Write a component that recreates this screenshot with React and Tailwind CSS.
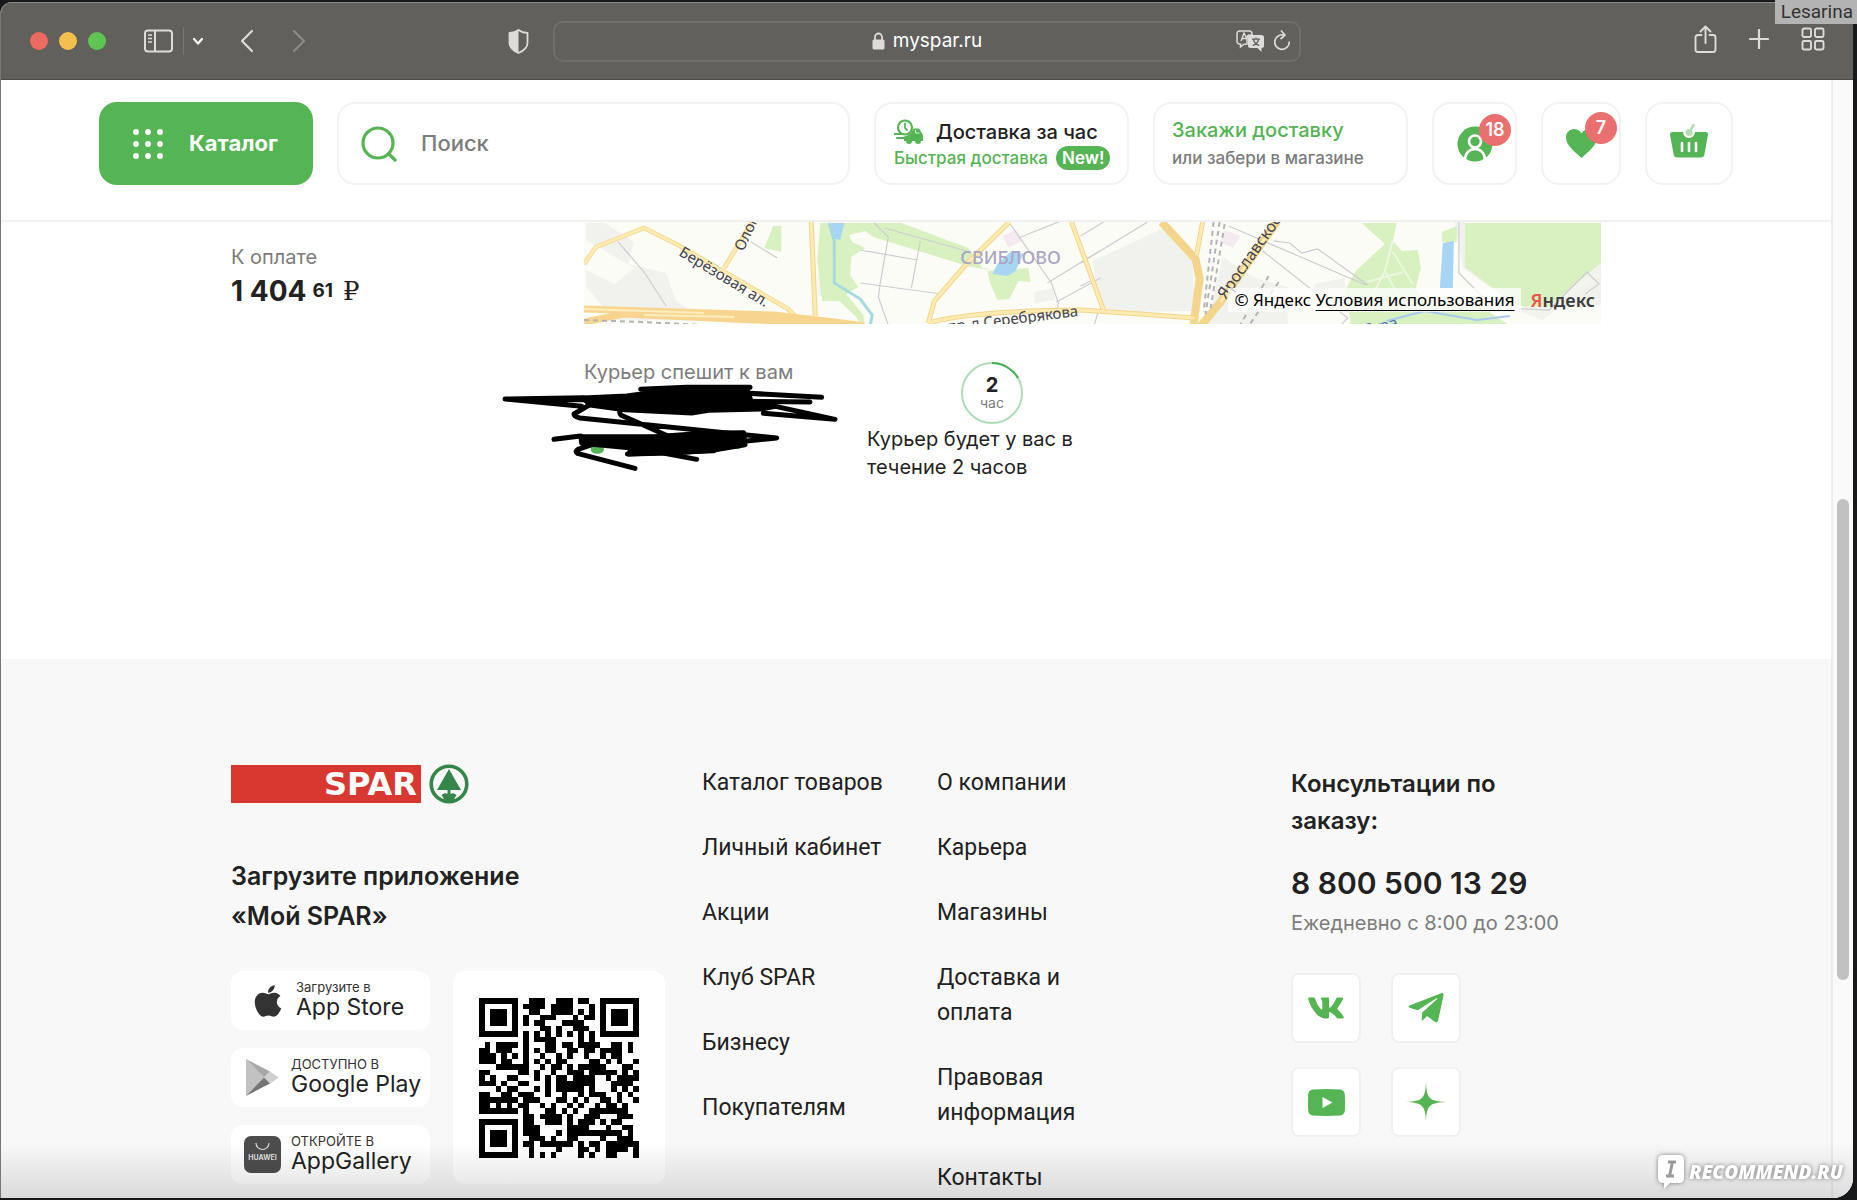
import React, { useState } from "react";
import { FaApple, FaTelegramPlane, FaVk } from "react-icons/fa";

const catalogLinks = ["Каталог товаров", "Личный кабинет", "Акции", "Клуб SPAR", "Бизнесу", "Покупателям"];
const companyLinks = ["О компании", "Карьера", "Магазины", "Доставка и оплата", "Правовая информация", "Контакты"];

// QR modules, one string per row
const qrRows = [
  "#######..###..###.##..#######",
  "#.....#.####.####...#.#.....#",
  "#.###.#..##..####.#.#.#.###.#",
  "#.###.#.#..###...#.##.#.###.#",
  "#.###.#.#.##...####...#.###.#",
  "#.....#....##.#..###..#.....#",
  "#######.#.#.#.#.#.#.#.#######",
  "........#.####....#.#........",
  ".#.####.#...##.##.####..##.#.",
  "##.###..#.#.##..##.##.####.#.",
  "###.#.#.#..#..#.#..#..#.##...",
  "###.##..#.#.#.##....##.#.#..#",
  "...######..#.##.#.#####...##.",
  "##.....##.#..#..###.#####.#.#",
  "#.#..##...#.#.##.####..#.####",
  "###.#..##...#.#######...####.",
  "...#.##...#.#.#####.#...#.#.#",
  "##..##.###..#..#..#.###..#.#.",
  "#######.###...##.#.#..##.#..#",
  "##.#.#.##..#.#..#.#..#.##.#..",
  "#######.#...##.#.#..#######..",
  "........##.####.#..###...###.",
  "#######.##..###.#.###.#.##...",
  "#.....#.###.....####...#..##.",
  "#.###.#.###...#.##########.#.",
  "#.###.#..###.#..##....#..###.",
  "#.###.#.##.######.#.##.######",
  "#.....#..#....#...##.#.####.#",
  "#######..#.#.#....#.#..##...#",
];

function QrCode() {
  return (
    <svg viewBox="0 0 29 29" className="w-40 h-40" role="img" aria-label="QR-код приложения" shapeRendering="crispEdges">
      {qrRows.map((row, y) =>
        row.split("").map((cell, x) =>
          cell === "#" ? <rect key={`${x}-${y}`} x={x} y={y} width="1" height="1" /> : null
        )
      )}
    </svg>
  );
}

function BrowserBar() {
  return (
    <div className="grid grid-cols-[552fr_748fr_552fr] items-center h-[78px] shrink-0 bg-[#61605d] border-t border-[#8a8987] border-b border-b-[#4b4a48] text-[#dddcda]">
      <div className="flex items-center pl-[29px]">
        <div className="flex gap-[11px]">
          <span className="w-[18px] h-[18px] rounded-full bg-[#ed6a5e]"></span>
          <span className="w-[18px] h-[18px] rounded-full bg-[#f5bf4f]"></span>
          <span className="w-[18px] h-[18px] rounded-full bg-[#61c554]"></span>
        </div>
        <button aria-label="Боковое меню" className="ml-[38px]">
          <svg className="w-[29px] h-6" viewBox="0 0 29 24" fill="none" stroke="currentColor" strokeWidth="2">
            <rect x="1" y="1.5" width="27" height="21" rx="3" />
            <path d="M11 1.5v21" />
            <path d="M4 6h4M4 9.5h4M4 13h4" strokeWidth="1.4" />
          </svg>
        </button>
        <span className="w-px h-7 ml-2.5 bg-[#777673]"></span>
        <button aria-label="Группы вкладок" className="ml-2">
          <svg className="w-3 h-3" viewBox="0 0 12 12" fill="none" stroke="white" strokeWidth="2.2" strokeLinecap="round" strokeLinejoin="round">
            <path d="M2 4l4 4.5L10 4" />
          </svg>
        </button>
        <button aria-label="Назад" className="ml-9">
          <svg className="w-[14px] h-6" viewBox="0 0 14 24" fill="none" stroke="currentColor" strokeWidth="2.2" strokeLinecap="round" strokeLinejoin="round">
            <path d="M12 2L2 12l10 10" />
          </svg>
        </button>
        <button aria-label="Вперёд" className="ml-[38px] text-[#8b8a88]">
          <svg className="w-[14px] h-6" viewBox="0 0 14 24" fill="none" stroke="currentColor" strokeWidth="2.2" strokeLinecap="round" strokeLinejoin="round">
            <path d="M2 2l10 10L2 22" />
          </svg>
        </button>
        <button aria-label="Отчёт о конфиденциальности" className="ml-auto mr-6">
          <svg className="w-[21px] h-[25px]" viewBox="0 0 21 25">
            <path d="M10.500 1C8 3 4.500 3.800 1.500 4v10c0 4.500 4.500 8 9 10 4.500-2 9-5.500 9-10V4c-3-.2-6.500-1-9-3z" fill="none" stroke="currentColor" strokeWidth="1.800" strokeLinejoin="round" />
            <path d="M10.500 1C8 3 4.500 3.800 1.500 4v10c0 4.500 4.500 8 9 10z" fill="currentColor" />
          </svg>
        </button>
      </div>

      <div className="flex items-center justify-center relative h-[41px] rounded-[10px] border-2 border-[#6f6e6b]">
        <svg className="w-[13px] h-[18px] mr-2" viewBox="0 0 13 18">
          <rect x="0.500" y="7.500" width="12" height="10" rx="1.500" fill="currentColor" />
          <path d="M3 8V5a3.500 3.500 0 017 0v3" fill="none" stroke="currentColor" strokeWidth="1.800" />
        </svg>
        <input
          aria-label="Адрес"
          defaultValue="myspar.ru"
          className="field-sizing-content bg-transparent outline-none text-white text-[19px] leading-6 font-['Inter',sans-serif]"
        />
        <div className="absolute right-2 flex items-center gap-2">
          <button aria-label="Перевести">
            <svg className="w-[29px] h-[22px]" viewBox="0 0 29 22">
              <path d="M3.500 1h10a2.500 2.500 0 012.500 2.500V5h-2a3 3 0 00-3 3v6l-3 .200L4.500 17v-3h-1A2.500 2.500 0 011 11.500v-8A2.500 2.500 0 013.500 1z" fill="none" stroke="currentColor" strokeWidth="1.500" />
              <path d="M5 11l3-8 3 6M6 8.500h4" fill="none" stroke="currentColor" strokeWidth="1.400" />
              <path d="M14.500 5h11A2.500 2.500 0 0128 7.500v8a2.500 2.500 0 01-2.500 2.500v4l-4-4h-7a2.500 2.500 0 01-2.500-2.500v-8A2.500 2.500 0 0114.500 5z" fill="currentColor" />
              <path d="M16 9.200h8M20 7.500v1.700M22.500 9.500c-.500 2.500-2.500 5-6 6M17.500 9.500c.500 2.500 2.500 5 6 6" fill="none" stroke="#61605d" strokeWidth="1.300" />
            </svg>
          </button>
          <button aria-label="Обновить">
            <svg className="w-[18px] h-[22px]" viewBox="0 0 18 22" fill="none" stroke="currentColor" strokeWidth="1.700" strokeLinecap="round" strokeLinejoin="round">
              <path d="M11.500 5.200A7.300 7.300 0 1016.300 12" />
              <path d="M8.500 1l3.500 4.200-4 3.300" />
            </svg>
          </button>
        </div>
      </div>

      <div className="flex items-center justify-end gap-8 pr-7 pb-1">
        <button aria-label="Поделиться">
          <svg className="w-[23px] h-[29px]" viewBox="0 0 23 29" fill="none" stroke="currentColor" strokeWidth="1.900" strokeLinecap="round" strokeLinejoin="round">
            <path d="M7.500 10H4a2.500 2.500 0 00-2.500 2.500v12A2.500 2.500 0 004 27h15a2.500 2.500 0 002.500-2.500v-12A2.500 2.500 0 0019 10h-3.500" />
            <path d="M11.500 18V1.500M6.500 6.500l5-5 5 5" />
          </svg>
        </button>
        <button aria-label="Новая вкладка">
          <svg className="w-5 h-5" viewBox="0 0 20 20" stroke="currentColor" strokeWidth="2.200" strokeLinecap="round">
            <path d="M10 1v18M1 10h18" />
          </svg>
        </button>
        <button aria-label="Обзор вкладок">
          <svg className="w-6 h-6" viewBox="0 0 24 24" fill="none" stroke="currentColor" strokeWidth="1.900">
            <rect x="1.500" y="1.500" width="8.500" height="8.500" rx="1.500" />
            <rect x="14" y="1.500" width="8.500" height="8.500" rx="1.500" />
            <rect x="1.500" y="14" width="8.500" height="8.500" rx="1.500" />
            <rect x="14" y="14" width="8.500" height="8.500" rx="1.500" />
          </svg>
        </button>
      </div>
    </div>
  );
}

function Header() {
  const [query, setQuery] = useState("");

  return (
    <header className="flex items-start gap-6 h-[142px] px-[98px] pt-[22px] bg-white border-b-2 border-[#f0f0f0]">
      <button className="flex items-center w-[214px] h-[83px] pl-[34px] rounded-[18px] bg-[#55b454] text-white shrink-0">
        <svg className="w-[30px] h-[30px]" viewBox="0 0 30 30" fill="currentColor">
          {[3, 15, 27].map((y) => [3, 15, 27].map((x) => <circle key={`${x}-${y}`} cx={x} cy={y} r="2.900" />))}
        </svg>
        <span className="ml-[26px] text-[22px] font-bold">Каталог</span>
      </button>

      <label className="flex items-center flex-1 min-w-0 h-[83px] pl-[22px] rounded-[18px] border-2 border-[#f3f3f3]">
        <svg className="w-9 h-9 shrink-0" viewBox="0 0 36 36" fill="none" stroke="#55b454" strokeWidth="3.200" strokeLinecap="round">
          <circle cx="17" cy="17" r="15" />
          <path d="M28 28l6 6" />
        </svg>
        <input
          type="search"
          aria-label="Поиск"
          placeholder="Поиск"
          value={query}
          onChange={(e) => setQuery(e.target.value)}
          className="flex-1 min-w-0 ml-6 outline-none text-[22px] font-medium placeholder:text-[#7c7c7c]"
        />
      </label>

      <a href="#fast" className="flex flex-col justify-center w-[255px] h-[83px] pl-[18px] rounded-[18px] border-2 border-[#f3f3f3] shrink-0">
        <span className="flex items-center gap-3 text-[20px] leading-7 font-medium text-[#222]">
          <svg className="w-[30px] h-[25px]" viewBox="0 0 30 25">
            <circle cx="11" cy="8.500" r="7" fill="none" stroke="#55b454" strokeWidth="2.200" />
            <path d="M11 4.500V9l2 2" fill="none" stroke="#55b454" strokeWidth="1.800" strokeLinecap="round" />
            <path d="M0 15h9M3 19h7" stroke="#55b454" strokeWidth="2" strokeLinecap="round" />
            <path d="M10 17.500c4-.5 8-3.500 9.500-8H25l4 6.500v6h-2a3 3 0 01-6 0h-3a3 3 0 01-6 0h-2z" fill="#55b454" />
            <path d="M21.500 11v3h4" stroke="white" fill="none" strokeWidth="0.800" />
          </svg>
          Доставка за час
        </span>
        <span className="flex items-center gap-2 text-[17px] leading-6 font-medium text-[#55b454]">
          Быстрая доставка
          <span className="px-1.5 rounded-full bg-[#55b454] text-white font-semibold">New!</span>
        </span>
      </a>

      <a href="#order" className="flex flex-col justify-center w-[255px] h-[83px] pl-[17px] rounded-[18px] border-2 border-[#f3f3f3] shrink-0">
        <span className="text-[20px] leading-7 font-medium text-[#55b454]">Закажи доставку</span>
        <span className="text-[17px] leading-7 font-medium text-[#7c7c7c]">или забери в магазине</span>
      </a>

      <button aria-label="Профиль" className="relative flex items-center justify-center w-[85px] h-[83px] rounded-[18px] border-2 border-[#f3f3f3] shrink-0">
        <svg className="w-9 h-9" viewBox="0 0 36 36">
          <circle cx="18" cy="18" r="17.500" fill="#55b454" />
          <circle cx="18" cy="15.500" r="6" fill="none" stroke="white" strokeWidth="2.600" />
          <path d="M8 34c0-6.500 4-11 10-11s10 4.500 10 11" fill="none" stroke="white" strokeWidth="2.600" />
        </svg>
        <span className="absolute top-2.5 right-1 flex items-center justify-center w-8 h-8 rounded-full bg-[#e9706e] text-white text-lg font-semibold">18</span>
      </button>

      <button aria-label="Избранное" className="relative flex items-center justify-center w-20 h-[83px] rounded-[18px] border-2 border-[#f3f3f3] shrink-0">
        <svg className="w-[31px] h-[29px]" viewBox="0 0 31 29" fill="#55b454">
          <path d="M15.500 29C11 24.500 0 17 0 8.500 0 3.500 3.500 0 8 0c3 0 6 1.500 7.500 4.500C17 1.500 20 0 23 0c4.500 0 8 3.500 8 8.500C31 17 20 24.500 15.500 29z" />
        </svg>
        <span className="absolute top-2 right-0.5 flex items-center justify-center w-8 h-8 rounded-full bg-[#e9706e] text-white text-lg font-semibold">7</span>
      </button>

      <button aria-label="Корзина" className="flex items-center justify-center w-[88px] h-[83px] pb-1.5 rounded-[18px] border-2 border-[#f3f3f3] shrink-0">
        <svg className="w-[38px] h-[34px]" viewBox="0 0 38 34">
          <path d="M2 8h11a6 6 0 0012 0h11q2 0 2 2.500L34.500 30q-.5 3.500-4 3.500h-23q-3.500 0-4-3.500L0 10.500Q0 8 2 8z" fill="#55b454" />
          <path d="M19.500 8l4-7" stroke="#b5dcb5" strokeWidth="2.600" strokeLinecap="round" />
          <circle cx="19" cy="8.500" r="3.500" fill="#b5dcb5" />
          <path d="M12 19v8M19 19v8M26 19v8" stroke="white" strokeWidth="2.600" strokeLinecap="round" />
        </svg>
      </button>
    </header>
  );
}

function CityMap() {
  return (
    <div className="relative h-[102px] overflow-hidden">
      <svg className="w-full h-full" viewBox="0 0 1016 102" preserveAspectRatio="xMidYMid slice" fontFamily="'Noto Sans', sans-serif">
        <rect width="1016" height="102" fill="#fbfcf6" />

        {/* built-up areas */}
        <g fill="#f1f1ee">
          <path d="M2 1h19l29 19-6 22 38 9 10 28 20 13-3 6H30L2 64V48l29 14 19-16L2 18z" />
          <path d="M508 39l71-33 29 33 2 50-93 1z" />
          <path d="M234 54l14-1v20l-14 1zM450 70l20-4v12l-20 3zM638 35l30 20 35 10v37h-80zM730 62l30-6v30l-30-8z" />
          <path d="M870 0h10v45l55 38h81V36l-60 50-30-6-48-34z" />
        </g>
        <path d="M418 14l14-6 6 10-14 8zM640 8l16 6-8 12-12-6z" fill="#f5eaf0" />

        {/* parks */}
        <g fill="#d9f0c1">
          <path d="M236 1h81l67 25 14 20 10 2-10-1-12-2-97-30-8-6-16 4 3 7 13 6-14 9-1 18 8 12-12 7 17 21 2 16-9-14-17-16h-17l-2-17-3-24z" />
          <path d="M189 4h8v26l-17-4zM403 49l41-3 2 14-12-1-9 18-12 1-7-16z" />
          <path d="M777 1h35l-4 18 9 10 16-1 3 18-5 20 8 12h47l52 34H761l5-13-6-30 11-20 29-27z" />
          <path d="M857 10l15-6v16h-15zM880 1h136v40l-58 48-29-7-49-37z" />
        </g>
        <path d="M958 98l-28-10 14-4 20 2 46-40 6 8z" fill="#f4f4ee" />
        <path d="M808 19l-8 30 20 36M800 49l-18 36M818 50l-36 10M808 30l20 32" fill="none" stroke="#ecf7df" strokeWidth="2" />

        {/* water */}
        <g fill="#a9d5f5">
          <path d="M246 1h14l-4 17-8-2zM413 42l14-13 12 3-8 17-8 5-15-2z" />
          <path d="M858 21l11-2-1 47h-13z" />
        </g>
        <path d="M245 1l5 18v42l26 16 12 16-2 10" fill="none" stroke="#a5dbe0" strokeWidth="3" />
        <path d="M802 99l38-10 52 9 33-4" fill="none" stroke="#a9c8ee" strokeWidth="2" />

        {/* minor streets */}
        <g fill="none" stroke="#cfccd1" strokeWidth="1.200">
          <path d="M34 20l26 30 22 34M167 20l26 16" />
          <path d="M290 1l14 14-8 46-2 14 10 28M276 28l57 10M336 19l-9 47M276 61l81 11M300 6l82 23" />
          <path d="M425 1l42 60 7 20-2 10-18 3M434 16l50-20M463 61l52-32M472 80l44-24" />
          <path d="M496 14l23-14M496 41l67-41M496 64l12-6M644 4l137 59M678 29l85 67-6 6M689 19l16 2 12 10 16-4 50 36" />
          <path d="M874 0v51l28 28M920 86l44 2 38-38 12 12-14 10M514 89l-4 13" />
        </g>

        {/* highways */}
        <g fill="none" stroke="#f3d58b" strokeLinejoin="round">
          <path d="M0 42l12-17L60 6l34 17 110 64 8 8M168 0l-28 46" strokeWidth="4.500" />
          <path d="M227 0l4 94M425 0l-43 42-32 37-6 22M487 0l32 88M618 0l-6 33" strokeWidth="5" />
          <path d="M344 101q40-12 152-13l60 4 54 4" strokeWidth="5" />
          <path d="M577 0l34 37 4 20-4 30-2 15M692 0l-56 80-20 24" strokeWidth="8" />
        </g>
        <g fill="none" stroke="#fdebb2" strokeLinejoin="round">
          <path d="M0 42l12-17L60 6l34 17 110 64 8 8M168 0l-28 46" strokeWidth="3" />
          <path d="M227 0l4 94M425 0l-43 42-32 37-6 22M487 0l32 88M618 0l-6 33" strokeWidth="3" />
          <path d="M344 101q40-12 152-13l60 4 54 4M692 0l-56 80" strokeWidth="3" />
        </g>
        <path d="M0 87l190 6 60 7 30 4M0 100l40-8 130 6 70 2" fill="none" stroke="#f8d58f" strokeWidth="7" />
        <path d="M0 87l120 4M60 93l90 2" fill="none" stroke="#fdedc0" strokeWidth="2" />

        {/* railways */}
        <g fill="none" stroke="#b4b4b8" strokeWidth="2" strokeDasharray="5 4">
          <path d="M0 98l60 2 60 3M629 0l-10 90M635 0l-14 92M640 2l-14 84M684 54l-28 48M694 60l-30 44" />
        </g>

        <g fill="#444450" fontSize="15">
          <text x="94" y="33" transform="rotate(31 94 33)">Берёзовая ал.</text>
          <text x="159" y="30" transform="rotate(-65 159 30)">Олонецкая</text>
          <text x="641" y="78" fontSize="16" transform="rotate(-55 641 78)">Ярославское</text>
          <text x="364" y="110" transform="rotate(-7 364 110)">пр-д Серебрякова</text>
          <text x="225" y="112">О</text>
        </g>
        <text x="376" y="42" fontSize="18" fontWeight="500" fill="#aaa5c2">СВИБЛОВО</text>
        <text x="780" y="114" fontSize="16" fill="#4d71b8" transform="rotate(-14 780 114)">Яуза</text>
      </svg>
      <div className="absolute right-1.5 bottom-3 flex items-center gap-2.5 font-['Noto_Sans',sans-serif] text-[17px] leading-6 text-black">
        <span className="px-1.5 bg-white/75">
          © Яндекс <a href="#terms" className="underline underline-offset-4">Условия использования</a>
        </span>
        <span className="text-lg leading-6 font-semibold text-[#3d3d3d]">
          <span className="text-[#e8564b]">Я</span>ндекс
        </span>
      </div>
    </div>
  );
}

// Marker strokes hiding the courier's name and phone
function Scribble() {
  return (
    <svg className="absolute -left-[94px] top-4 w-[360px] h-[105px]" viewBox="0 0 1080 315" fill="none" stroke="black" strokeWidth="15" strokeLinecap="round" strokeLinejoin="round">
      <ellipse cx="322" cy="226" rx="20" ry="13" fill="#55b454" stroke="none" />
      <ellipse cx="740" cy="215" rx="14" ry="10" fill="#55b454" stroke="none" />
      <path d="M280 72l130-6 180-24h180l15 45 70 10-40 8-160 4-50 8-200-10-105-14z" fill="black" />
      <path d="M275 208l-2-20 220 0 150-10 118-2 4 36-94 16-105 8-150 4 10-18z" fill="black" />
      <path d="M995 70L600 48 452 46 590 40h190M960 84L45 75l230 22M45 75l235-4M860 98l175 38-215-18M300 92l-48 28q0 8 18 12l590 60-120 12M400 100q-18 14-6 24l140 62M192 196l80-10M412 240l260-10M620 256l-160-30M435 283L262 238q-8-6 2-12l60-20" />
    </svg>
  );
}

function OrderInfo() {
  return (
    <main className="flex h-[437px] px-[230px] bg-white">
      <div className="w-[353px] shrink-0 pt-[21px]">
        <p className="text-[20px] leading-7 text-[#7c7c7c]">К оплате</p>
        <p className="flex items-center gap-1.5 text-[28px] leading-10 font-bold text-[#222]">
          1 404 <span className="text-[19px] leading-10">61</span>
          <span className="ml-1 text-[26px] leading-10 font-normal font-['DejaVu_Serif',serif]">₽</span>
        </p>
      </div>
      <div className="flex-1 min-w-0">
        <CityMap />
        <div className="flex items-start mt-[34px]">
          <div className="relative w-[283px]">
            <p className="text-[20px] leading-7 text-[#7c7c7c]">Курьер спешит к вам</p>
            <Scribble />
          </div>
          <div className="w-[250px] pt-1">
            <div className="relative w-[62px] h-[62px] mx-auto">
              <svg className="w-full h-full" viewBox="0 0 62 62" fill="none">
                <circle cx="31" cy="31" r="30" stroke="#b0dcb8" strokeWidth="2" />
                <path d="M31 1a30 30 0 0126 15" stroke="#4caf57" strokeWidth="2" />
              </svg>
              <div className="absolute inset-0 flex flex-col items-center justify-center">
                <span className="text-xl leading-5 font-bold text-[#222]">2</span>
                <span className="text-sm leading-4 text-[#7c7c7c]">час</span>
              </div>
            </div>
            <p className="mt-px text-[20px] leading-7 text-[#222]">Курьер будет у вас в течение 2 часов</p>
          </div>
        </div>
      </div>
    </main>
  );
}

function SparLogo() {
  return (
    <div className="flex items-center gap-2 h-[38px]">
      <div className="flex items-center justify-end w-[190px] h-[38px] pr-1 bg-[#d93831] text-white font-bold text-[32px] leading-[38px] font-['DejaVu_Sans',sans-serif]">
        SPAR
      </div>
      <svg className="w-10 h-10" viewBox="0 0 40 40">
        <circle cx="20" cy="20" r="17.800" fill="#f8f8f8" stroke="#36854a" strokeWidth="3.600" />
        <path d="M20 5l12 21H8z" fill="#36854a" />
        <path d="M18.500 25h3v5q3-2 6 1l-3 5h-9l-3-5q3-3 6-1z" fill="#36854a" />
      </svg>
    </div>
  );
}

function StoreButton({ caption, title, icon }) {
  return (
    <a href="#store" className="flex items-center h-[59px] pl-[13px] rounded-xl bg-white">
      <span className="flex justify-center min-w-[37px] mr-2.5">{icon}</span>
      <span className="flex flex-col pb-1">
        <span className="text-[13px] leading-4 text-[#333]">{caption}</span>
        <span className="text-[23px] leading-6 text-[#222]">{title}</span>
      </span>
    </a>
  );
}

function LinkList({ links }) {
  return (
    <ul className="flex flex-col gap-[30px] w-40 text-[23px] leading-[35px] text-[#222] font-['Roboto',sans-serif]">
      {links.map((name) => (
        <li key={name}>
          <a href="#link" className={name.length < 16 ? "whitespace-nowrap" : ""}>{name}</a>
        </li>
      ))}
    </ul>
  );
}

function SocialLink({ label, children }) {
  return (
    <a href="#social" aria-label={label} className="flex items-center justify-center w-[70px] h-[70px] rounded-lg border-2 border-[#f1f1f1] bg-white text-[#55b454]">
      {children}
    </a>
  );
}

function Footer() {
  return (
    <footer className="flex-1 grid grid-cols-[471fr_235fr_354fr_310fr] items-start px-[230px] pt-[106px] bg-[#f8f8f8] text-[#222]">
      <div>
        <SparLogo />
        <h2 className="mt-[53px] text-[25px] leading-10 font-semibold">
          Загрузите приложение
          <br />
          «Мой SPAR»
        </h2>
        <div className="flex gap-[23px] mt-[35px]">
          <div className="flex flex-col gap-[18px] w-[199px]">
            <StoreButton
              caption="Загрузите в"
              title="App Store"
              icon={
                <span className="pl-1.5">
                  <FaApple size={36} color="#333" />
                </span>
              }
            />
            <StoreButton
              caption="ДОСТУПНО В"
              title="Google Play"
              icon={
                <svg className="w-[35px] h-[39px]" viewBox="0 0 35 39">
                  <path d="M1 1v37l18-18.500z" fill="#c2c2c2" />
                  <path d="M1 1l18 18.500 6-6z" fill="#a8a8a8" />
                  <path d="M25 13.500l9 6-9 6-6-6z" fill="#d0d0d0" />
                  <path d="M1 38l18-18.500 6 6z" fill="#757575" />
                </svg>
              }
            />
            <StoreButton
              caption="ОТКРОЙТЕ В"
              title="AppGallery"
              icon={
                <svg className="w-[37px] h-[37px]" viewBox="0 0 37 37">
                  <rect width="37" height="37" rx="7" fill="#4d4d4d" />
                  <path d="M12 7a6.500 6.500 0 0013 0" fill="none" stroke="#ddd" strokeWidth="1.200" />
                  <text x="18.500" y="23.500" textAnchor="middle" fontSize="7" fontWeight="700" fill="#ddd" fontFamily="Inter, sans-serif">HUAWEI</text>
                </svg>
              }
            />
          </div>
          <div className="flex items-center justify-center w-[212px] h-[213px] rounded-xl bg-white">
            <QrCode />
          </div>
        </div>
      </div>

      <LinkList links={catalogLinks} />
      <LinkList links={companyLinks} />

      <div>
        <h2 className="w-60 text-[24px] leading-[37px] font-semibold">Консультации по заказу:</h2>
        <a href="tel:88005001329" className="block mt-[26px] text-[30px] leading-9 font-semibold">8 800 500 13 29</a>
        <p className="mt-2 text-[20px] leading-7 text-[#7c7c7c]">Ежедневно с 8:00 до 23:00</p>
        <div className="grid grid-cols-[70px_70px] gap-x-[30px] gap-y-6 mt-9">
          <SocialLink label="ВКонтакте">
            <FaVk size={38} />
          </SocialLink>
          <SocialLink label="Telegram">
            <FaTelegramPlane size={40} />
          </SocialLink>
          <SocialLink label="YouTube">
            <svg className="w-[37px] h-[27px]" viewBox="0 0 37 27">
              <path d="M5 .600Q18.500-.600 32 .600q4.500.400 4.800 5 .400 8 0 16-.300 4.500-4.800 4.900-13.500.900-27 0-4.500-.400-4.800-4.900-.400-8 0-16Q.500 1 5 .600z" fill="currentColor" />
              <path d="M14.500 8l10 5.500-10 5.500z" fill="white" />
            </svg>
          </SocialLink>
          <SocialLink label="Дзен">
            <svg className="w-10 h-10" viewBox="0 0 40 40" fill="currentColor">
              <path d="M20 0c.6 16 3 19.400 20 20-17 .600-19.400 4-20 20-.600-16-3-19.400-20-20 17-.600 19.400-4 20-20z" />
            </svg>
          </SocialLink>
        </div>
      </div>
    </footer>
  );
}

function Watermark() {
  return (
    <div className="absolute right-3.5 bottom-2.5 flex items-center gap-1 text-white font-['Open_Sans',sans-serif] drop-shadow-[0_0_2px_#777]">
      <svg className="w-7 h-9" viewBox="0 0 28 36">
        <path d="M6 1h16q5 0 5 5v18q0 5-5 5H13l-6 6v-6H6q-5 0-5-5V6q0-5 5-5z" fill="white" />
        <path d="M11 8h8M9 22h8M15.500 8l-3 14" stroke="#999" strokeWidth="3" />
      </svg>
      <span className="text-[19px] leading-7 font-extrabold italic">RECOMMEND.RU</span>
    </div>
  );
}

function App() {
  return (
    <div className="relative flex h-screen overflow-hidden pt-0.5 pb-0.5 pr-1 bg-[#17181a] font-['Inter',sans-serif]">
      <div className="relative flex flex-col flex-1 min-w-0 overflow-hidden rounded-t-xl rounded-br-[20px] bg-white border-l border-[#777]">
        <BrowserBar />
        <div className="flex flex-1 min-h-0">
          <div className="flex flex-col flex-1 min-w-0 overflow-hidden">
            <Header />
            <OrderInfo />
            <Footer />
          </div>
          <div className="relative w-[22px] shrink-0 bg-[#fafafa] border-l-2 border-[#ececec]">
            <div className="absolute left-1 top-[37.5%] h-[43%] w-3 rounded-full bg-[#c1c1c1]"></div>
          </div>
        </div>
        <div className="absolute inset-x-0 bottom-0 h-14 bg-linear-to-b from-transparent to-black/12 pointer-events-none"></div>
      </div>
      <div className="absolute top-0 right-0 h-6 pl-1.5 pr-1 bg-[#b3b3b3] font-['Roboto',sans-serif] text-[19px] leading-6 text-[#333]">Lesarina</div>
      <Watermark />
    </div>
  );
}

export default App;
